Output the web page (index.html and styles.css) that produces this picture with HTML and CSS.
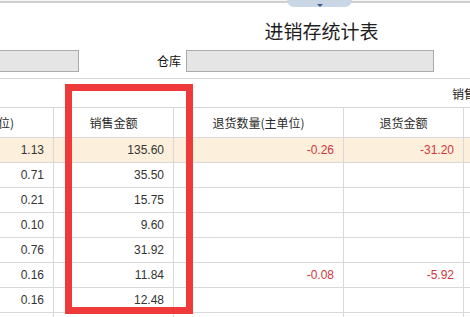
FILE: index.html
```html
<!DOCTYPE html>
<html lang="zh-CN">
<head>
<meta charset="utf-8">
<title>进销存统计表</title>
<link rel="stylesheet" href="styles.css">
</head>
<body>
<div class="page">
  <div class="topline"></div>
  <div class="tab"><span class="tri"></span></div>
  <h1 class="title">进销存统计表</h1>
  <div class="filters">
    <div class="box box-a"></div>
    <span class="label">仓库</span>
    <div class="box box-b"></div>
  </div>
  <div class="table">
    <div class="group-row"><span class="group-label">销售</span></div>
    <div class="row head">
      <div class="cell">销售数量(主单位)</div>
      <div class="cell">销售金额</div>
      <div class="cell">退货数量(主单位)</div>
      <div class="cell">退货金额</div>
      <div class="cell"></div>
    </div>
    <div class="row hl">
      <div class="cell">1.13</div><div class="cell">135.60</div><div class="cell neg">-0.26</div><div class="cell neg">-31.20</div><div class="cell"></div>
    </div>
    <div class="row">
      <div class="cell">0.71</div><div class="cell">35.50</div><div class="cell"></div><div class="cell"></div><div class="cell"></div>
    </div>
    <div class="row">
      <div class="cell">0.21</div><div class="cell">15.75</div><div class="cell"></div><div class="cell"></div><div class="cell"></div>
    </div>
    <div class="row">
      <div class="cell">0.10</div><div class="cell">9.60</div><div class="cell"></div><div class="cell"></div><div class="cell"></div>
    </div>
    <div class="row">
      <div class="cell">0.76</div><div class="cell">31.92</div><div class="cell"></div><div class="cell"></div><div class="cell"></div>
    </div>
    <div class="row">
      <div class="cell">0.16</div><div class="cell">11.84</div><div class="cell neg">-0.08</div><div class="cell neg">-5.92</div><div class="cell"></div>
    </div>
    <div class="row">
      <div class="cell">0.16</div><div class="cell">12.48</div><div class="cell"></div><div class="cell"></div><div class="cell"></div>
    </div>
    <div class="row">
      <div class="cell"></div><div class="cell"></div><div class="cell"></div><div class="cell"></div><div class="cell"></div>
    </div>
  </div>
  <div class="mark"></div>
</div>
</body>
</html>
```
FILE: styles.css
```css
html, body {
  margin: 0;
  padding: 0;
  background: #fff;
  overflow: hidden;
}
.page {
  position: relative;
  width: 470px;
  height: 317px;
  overflow: hidden;
  font-family: "Liberation Sans", "Noto Sans CJK SC", sans-serif;
  font-size: 12px;
  color: #333;
}
.topline {
  height: 1px;
  border-bottom: 2px solid #cfcfcf;
  background: #f4f4f4;
}
.tab {
  position: absolute;
  left: 287px;
  top: 0;
  width: 65px;
  height: 7px;
  background: #c9d6e5;
  border-radius: 0 0 9px 9px;
  display: flex;
  justify-content: center;
}
.tri {
  margin-top: 4px;
  width: 0;
  height: 0;
  border-left: 3px solid transparent;
  border-right: 3px solid transparent;
  border-top: 3px solid #3d5d86;
}
.title {
  margin: 18px 0 0 0;
  width: 643px;
  text-align: center;
  font-family: "Noto Sans CJK SC", sans-serif;
  font-weight: normal;
  font-size: 19px;
  line-height: 20px;
  color: #1e1e1e;
}
.filters {
  display: flex;
  align-items: center;
  margin-top: 9px;
  height: 22px;
}
.box {
  box-sizing: border-box;
  height: 22px;
  background: #e5e5e5;
  border: 1px solid #ababab;
}
.box-a {
  width: 80px;
  margin-left: -1px;
}
.label {
  margin-left: 78px;
  width: 29px;
  font-family: "Noto Sans CJK SC", sans-serif;
  font-size: 12px;
  color: #111;
  line-height: 22px;
}
.box-b {
  width: 248px;
}
.table {
  margin-top: 6px;
  margin-left: -117px;
  width: 760px;
}
.group-row {
  box-sizing: border-box;
  height: 30px;
  border-top: 1px solid #d6d6d6;
  border-bottom: 1px solid #d6d6d6;
  display: flex;
  align-items: center;
  padding-left: 569px;
  font-family: "Noto Sans CJK SC", sans-serif;
  color: #222;
}
.row {
  display: grid;
  grid-template-columns: 171px 120px 170px 120px 179px;
  height: 25px;
}
.row.head {
  height: 30px;
}
.cell {
  box-sizing: border-box;
  border-right: 1px solid #d9d9d9;
  border-bottom: 1px solid #d9d9d9;
  display: flex;
  align-items: center;
  justify-content: flex-end;
  padding-right: 9px;
  white-space: nowrap;
  overflow: hidden;
}
.head .cell {
  justify-content: center;
  padding-right: 0;
  font-family: "Noto Sans CJK SC", sans-serif;
  color: #2a2a2a;
}
.hl {
  background: #fcf0dc;
}
.neg {
  color: #d2363c;
}
.mark {
  position: absolute;
  left: 65px;
  top: 84px;
  width: 128px;
  height: 230px;
  box-sizing: border-box;
  border: 7px solid #ee3a3b;
}
```
